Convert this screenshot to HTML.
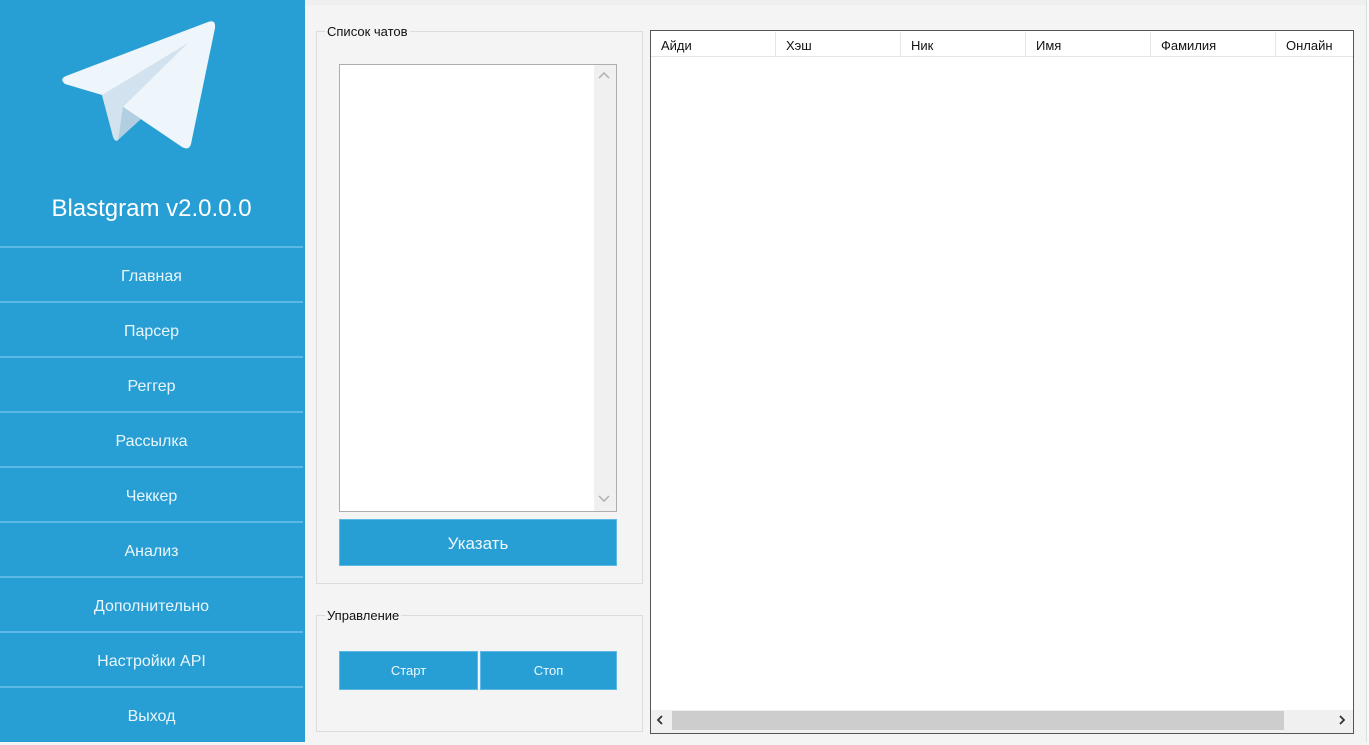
<!DOCTYPE html>
<html><head><meta charset="utf-8"><style>
*{margin:0;padding:0;box-sizing:border-box}
body{width:1369px;height:742px;background:#f4f4f4;font-family:"Liberation Sans",sans-serif;position:relative;overflow:hidden;font-size:13px;color:#111}
.abs{position:absolute}
#side{left:0;top:0;width:305px;height:742px;background:#279fd4}
.title{left:0;width:303px;top:195px;text-align:center;color:#fff;font-size:24px}
.mi{left:0;width:303px;height:55px;border-top:2px solid #5cb8e4;color:#eaf6fc;font-size:16px;text-align:center;line-height:57px}
.mw{left:303px;width:2px;top:246px;height:496px;background:#279fd4}
.gb{border:1px solid #dcdcdc}
.lg{background:#f4f4f4;padding:0 2px;font-size:13px;color:#111}
.btn{background:#279fd4;color:#eef8fd;text-align:center;border:1px solid #5cb8e4}
.hd{top:1px;height:24px;border-right:1px solid #e6e6e6;padding-left:10px;line-height:27px;font-size:13px}
</style></head><body>
<div class="abs" style="left:305px;top:0;width:1064px;height:5px;background:#efefef"></div>
<div class="abs" id="side">
<svg class="abs" style="left:0;top:0" width="305" height="170" viewBox="0 0 305 170">
<path d="M65 84 Q59 79 66 76 L208 22 Q216 19 215 28 L191 144 Q189 151 182 147 L123 107 L119 138 Q117 143 114 139 L102 95 Z" fill="#eef5fb"/>
<path d="M102 95 L188 43 L123 107 L118 140 Q115 142 113 137 Z" fill="#d2e2ee"/>
<path d="M123 107 L141 119 L118 140 Z" fill="#b2cfe2"/>
</svg>
<div class="abs title">Blastgram v2.0.0.0</div>
<div class="abs mi" style="top:246px">Главная</div>
<div class="abs mi" style="top:301px">Парсер</div>
<div class="abs mi" style="top:356px">Реггер</div>
<div class="abs mi" style="top:411px">Рассылка</div>
<div class="abs mi" style="top:466px">Чеккер</div>
<div class="abs mi" style="top:521px">Анализ</div>
<div class="abs mi" style="top:576px">Дополнительно</div>
<div class="abs mi" style="top:631px">Настройки API</div>
<div class="abs mi" style="top:686px">Выход</div>
</div>

<div class="abs gb" style="left:316px;top:31px;width:327px;height:553px"></div>
<div class="abs lg" style="left:325px;top:24px">Список чатов</div>
<div class="abs" style="left:339px;top:64px;width:278px;height:448px;background:#fff;border:1px solid #adadad"></div>
<div class="abs" style="left:594px;top:65px;width:22px;height:446px;background:#f0f0f0"></div>
<svg class="abs" style="left:598px;top:72px" width="12" height="8"><path d="M1 6 L6 1 L11 6" stroke="#b0b0b0" stroke-width="1.5" fill="none"/></svg>
<svg class="abs" style="left:598px;top:494px" width="12" height="8"><path d="M1 2 L6 7 L11 2" stroke="#b0b0b0" stroke-width="1.5" fill="none"/></svg>
<div class="abs btn" style="left:339px;top:519px;width:278px;height:47px;font-size:17px;line-height:47px">Указать</div>

<div class="abs gb" style="left:316px;top:615px;width:327px;height:117px"></div>
<div class="abs lg" style="left:325px;top:608px">Управление</div>
<div class="abs btn" style="left:339px;top:651px;width:139px;height:39px;line-height:38px">Старт</div>
<div class="abs btn" style="left:480px;top:651px;width:137px;height:39px;line-height:38px">Стоп</div>

<div class="abs" style="left:650px;top:30px;width:704px;height:704px;background:#fff;border:1px solid #555"></div>
<div class="abs" style="left:651px;top:31px;width:702px;height:26px;border-bottom:1px solid #e5e5e5">
<div class="abs hd" style="left:0;width:125px">Айди</div>
<div class="abs hd" style="left:125px;width:125px">Хэш</div>
<div class="abs hd" style="left:250px;width:125px">Ник</div>
<div class="abs hd" style="left:375px;width:125px">Имя</div>
<div class="abs hd" style="left:500px;width:125px">Фамилия</div>
<div class="abs hd" style="left:625px;width:77px;border-right:none">Онлайн</div>
</div>
<div class="abs" style="left:651px;top:710px;width:702px;height:23px;background:#f0f0f0"></div>
<div class="abs" style="left:672px;top:711px;width:612px;height:19px;background:#cdcdcd"></div>
<svg class="abs" style="left:656px;top:715px" width="8" height="10"><path d="M6 1 L2 5 L6 9" stroke="#333" stroke-width="1.8" fill="none"/></svg>
<svg class="abs" style="left:1338px;top:715px" width="8" height="10"><path d="M2 1 L6 5 L2 9" stroke="#333" stroke-width="1.8" fill="none"/></svg>
<div class="abs" style="left:1366px;top:0;width:3px;height:742px;background:#fafafa;border-left:1px solid #ddd"></div>
</body></html>
